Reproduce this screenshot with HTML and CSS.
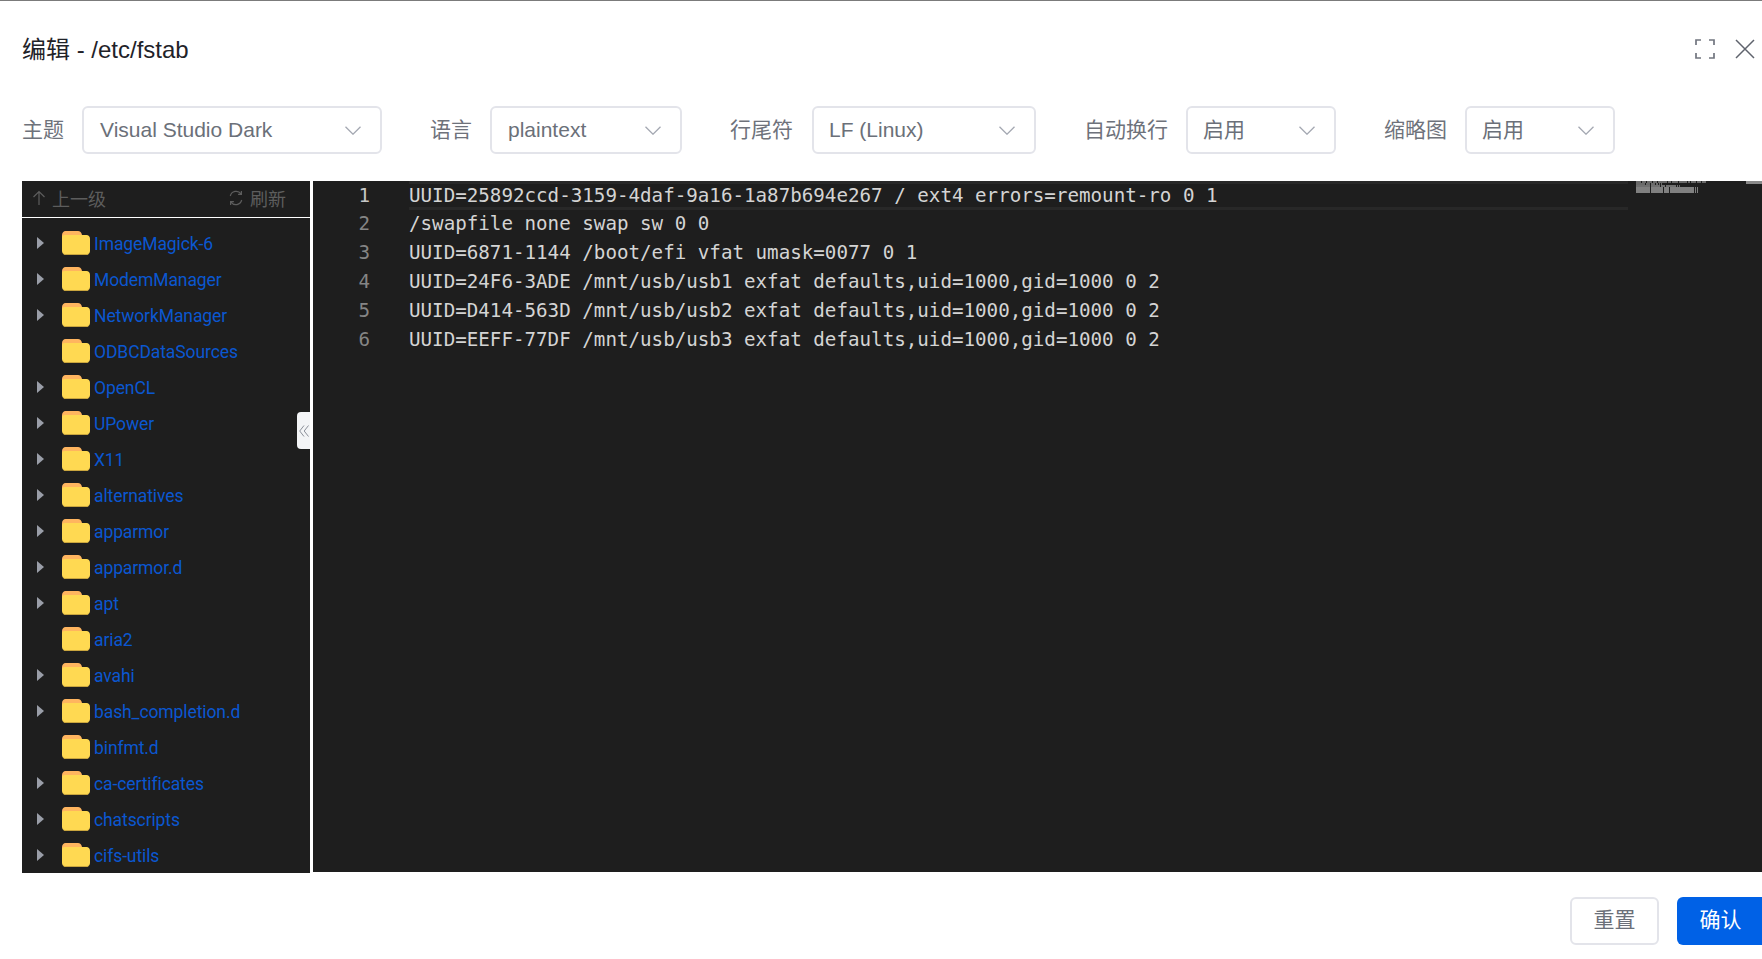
FILE: index.html
```html
<!DOCTYPE html>
<html lang="zh-CN">
<head>
<meta charset="utf-8">
<title>编辑 - /etc/fstab</title>
<link rel="stylesheet" href="styles.css">
</head>
<body>
<svg class="defs" width="0" height="0" aria-hidden="true">
  <symbol id="folder" viewBox="0 0 28 24">
    <path d="M0 4C0 1.800 1.600 0 3.500 0H16C18 0 19.500 1.500 20 4V10H0Z" fill="#ffb55f"/>
    <path d="M0 6.500C0 5.100 1.100 4 2.500 4H24.500C26.400 4 28 5.600 28 7.500V20C28 22.200 26.200 24 24 24H4C1.800 24 0 22.200 0 20Z" fill="#ffd952"/>
    <path d="M.5 22C1.200 23.300 2.500 24 4 24H24C25.500 24 26.800 23.300 27.500 22C26.500 22.800 25.500 23 24 23H4C2.500 23 1.500 22.800 .5 22Z" fill="#c9a53e"/>
  </symbol>
  <symbol id="chev" viewBox="0 0 16 9">
    <path d="M.5.700 8 8.200 15.500.700" fill="none" stroke="#a4a8b2" stroke-width="1.300"/>
  </symbol>
</svg>
<div class="dialog">
  <header class="head">
    <h1 class="title">编辑 - /etc/fstab</h1>
    <div class="head-icons">
      <svg class="ico-full" width="20" height="20" viewBox="0 0 20 20"><path d="M1 6V1H6M14 1H19V6M19 14V19H14M6 19H1V14" fill="none" stroke="#71757f" stroke-width="1.700"/></svg>
      <svg class="ico-close" width="20" height="20" viewBox="0 0 20 20"><path d="M1 1 19 19M19 1 1 19" fill="none" stroke="#5f636d" stroke-width="1.500"/></svg>
    </div>
  </header>

  <div class="toolbar">
    <label class="label">主题</label>
    <div class="select s-theme"><span>Visual Studio Dark</span><svg class="chev"><use href="#chev"/></svg></div>
    <label class="label l-lang">语言</label>
    <div class="select s-lang"><span>plaintext</span><svg class="chev"><use href="#chev"/></svg></div>
    <label class="label l-eol">行尾符</label>
    <div class="select s-eol"><span>LF (Linux)</span><svg class="chev"><use href="#chev"/></svg></div>
    <label class="label l-wrap">自动换行</label>
    <div class="select s-on"><span class="zh">启用</span><svg class="chev"><use href="#chev"/></svg></div>
    <label class="label l-map">缩略图</label>
    <div class="select s-on"><span class="zh">启用</span><svg class="chev"><use href="#chev"/></svg></div>
  </div>

  <div class="workspace">
    <aside class="tree">
      <div class="tree-head">
        <span class="tree-up">
          <svg width="14" height="16" viewBox="0 0 14 16"><path d="M7 15V1.500M1.500 7 7 1.500 12.500 7" fill="none" stroke="#5d5d5d" stroke-width="1.200"/></svg>
          上一级
        </span>
        <span class="tree-refresh">
          <svg width="16" height="16" viewBox="0 0 16 16"><path d="M2.300 6A6 6 0 0 1 13 3.800M13.700 10A6 6 0 0 1 3 12.200M13.400 1V4.300H10.100M2.600 15V11.700H5.900" fill="none" stroke="#5d5d5d" stroke-width="1.200"/></svg>
          刷新
        </span>
      </div>
      <ul class="tree-list">
        <li class="row"><i class="arrow"></i><svg class="folder"><use href="#folder"/></svg><a>ImageMagick-6</a></li>
        <li class="row"><i class="arrow"></i><svg class="folder"><use href="#folder"/></svg><a>ModemManager</a></li>
        <li class="row"><i class="arrow"></i><svg class="folder"><use href="#folder"/></svg><a>NetworkManager</a></li>
        <li class="row"><i class="noarrow"></i><svg class="folder"><use href="#folder"/></svg><a>ODBCDataSources</a></li>
        <li class="row"><i class="arrow"></i><svg class="folder"><use href="#folder"/></svg><a>OpenCL</a></li>
        <li class="row"><i class="arrow"></i><svg class="folder"><use href="#folder"/></svg><a>UPower</a></li>
        <li class="row"><i class="arrow"></i><svg class="folder"><use href="#folder"/></svg><a>X11</a></li>
        <li class="row"><i class="arrow"></i><svg class="folder"><use href="#folder"/></svg><a>alternatives</a></li>
        <li class="row"><i class="arrow"></i><svg class="folder"><use href="#folder"/></svg><a>apparmor</a></li>
        <li class="row"><i class="arrow"></i><svg class="folder"><use href="#folder"/></svg><a>apparmor.d</a></li>
        <li class="row"><i class="arrow"></i><svg class="folder"><use href="#folder"/></svg><a>apt</a></li>
        <li class="row"><i class="noarrow"></i><svg class="folder"><use href="#folder"/></svg><a>aria2</a></li>
        <li class="row"><i class="arrow"></i><svg class="folder"><use href="#folder"/></svg><a>avahi</a></li>
        <li class="row"><i class="arrow"></i><svg class="folder"><use href="#folder"/></svg><a>bash_completion.d</a></li>
        <li class="row"><i class="noarrow"></i><svg class="folder"><use href="#folder"/></svg><a>binfmt.d</a></li>
        <li class="row"><i class="arrow"></i><svg class="folder"><use href="#folder"/></svg><a>ca-certificates</a></li>
        <li class="row"><i class="arrow"></i><svg class="folder"><use href="#folder"/></svg><a>chatscripts</a></li>
        <li class="row"><i class="arrow"></i><svg class="folder"><use href="#folder"/></svg><a>cifs-utils</a></li>
      </ul>
      <button class="collapse" type="button" aria-label="收起">
        <svg width="10" height="12" viewBox="0 0 10 12"><path d="M5 .5 0.700 6 5 11.500M9.500 .5 5.200 6 9.500 11.500" fill="none" stroke="#8b8f99" stroke-width="1"/></svg>
      </button>
    </aside>

    <section class="editor">
      <div class="current-line"></div>
      <div class="line"><span class="num num-on">1</span><code>UUID=25892ccd-3159-4daf-9a16-1a87b694e267 / ext4 errors=remount-ro 0 1</code></div>
      <div class="line"><span class="num">2</span><code>/swapfile none swap sw 0 0</code></div>
      <div class="line"><span class="num">3</span><code>UUID=6871-1144 /boot/efi vfat umask=0077 0 1</code></div>
      <div class="line"><span class="num">4</span><code>UUID=24F6-3ADE /mnt/usb/usb1 exfat defaults,uid=1000,gid=1000 0 2</code></div>
      <div class="line"><span class="num">5</span><code>UUID=D414-563D /mnt/usb/usb2 exfat defaults,uid=1000,gid=1000 0 2</code></div>
      <div class="line"><span class="num">6</span><code>UUID=EEFF-77DF /mnt/usb/usb3 exfat defaults,uid=1000,gid=1000 0 2</code></div>
      <svg class="minimap" width="72" height="12" viewBox="0 0 72 12" aria-hidden="true">
        <g fill="none" stroke-width="2">
          <path d="M0 1H70" stroke="#6a6a6a" stroke-dasharray="5 1 4 1 5 1 4 1 9 1 3 1 6 1 8 1 2 1"/>
          <path d="M0 3H27" stroke="#6a6a6a" stroke-dasharray="9 1 4 1 4 1 2 1 1 1 1"/>
          <path d="M0 5H45" stroke="#707070" stroke-dasharray="14 1 9 1 4 1 10 1 1 1 1"/>
          <path d="M0 7H66" stroke="#808080" stroke-dasharray="14 1 12 1 5 1 24 1 1 1 1"/>
          <path d="M0 9H66" stroke="#808080" stroke-dasharray="14 1 12 1 5 1 24 1 1 1 1"/>
          <path d="M0 11H66" stroke="#808080" stroke-dasharray="14 1 12 1 5 1 24 1 1 1 1"/>
        </g>
      </svg>
      <div class="overview-mark"></div>
    </section>
  </div>

  <footer class="foot">
    <button class="btn btn-reset" type="button">重置</button>
    <button class="btn btn-ok" type="button">确认</button>
  </footer>
</div>
</body>
</html>
```
FILE: styles.css
```css
* { box-sizing: border-box; }
html, body { margin: 0; padding: 0; height: 100%; overflow: hidden; background: #fff; }
body { font-family: "Liberation Sans", "Noto Sans CJK SC", sans-serif; }
.defs { position: absolute; }

.dialog { width: 1762px; height: 959px; border-top: 1px solid #7b7b7b; padding-left: 22px; display: flex; flex-direction: column; overflow: hidden; }

.head { height: 105px; display: flex; justify-content: space-between; align-items: flex-start; padding-top: 33px; }
.title { margin: 0; font-size: 24px; line-height: 32px; font-weight: 400; color: #1f2329; }
.head-icons { display: flex; gap: 20px; padding-top: 5px; padding-right: 7px; }

.toolbar { height: 48px; display: flex; align-items: center; }
.label { font-size: 21px; color: #6e727b; white-space: nowrap; padding-bottom: 4px; }
.select { height: 48px; display: flex; align-items: center; justify-content: space-between; padding: 0 19px 0 16px; border: 2px solid #e3e4ea; border-radius: 6px; font-size: 21px; color: #6b7079; background: #fff; }
.zh { padding-bottom: 4px; margin-left: -1px; }
.chev { width: 16px; height: 9px; flex: none; }
.s-theme { width: 300px; margin-left: 18px; }
.s-lang { width: 192px; margin-left: 18px; }
.s-eol { width: 224px; margin-left: 19px; padding-left: 15px; }
.s-on { width: 150px; margin-left: 18px; }
.l-lang { margin-left: 48px; }
.l-eol { margin-left: 48px; }
.l-wrap { margin-left: 48px; }
.l-map { margin-left: 48px; }

.workspace { height: 691px; margin-top: 27px; display: flex; gap: 3px; }

.tree { width: 288px; height: 692px; flex: none; background: #1e1e1e; position: relative; overflow: hidden; }
.tree-head { height: 37px; border-bottom: 1px solid #fff; display: flex; justify-content: space-between; align-items: center; padding: 0 24px 2px 10px; font-size: 18px; color: #5d5d5d; }
.tree-up, .tree-refresh { display: flex; align-items: center; gap: 6px; }
.tree-list { list-style: none; margin: 0; padding: 8px 0 0; }
.row { height: 36px; display: flex; align-items: center; }
.arrow { width: 0; height: 0; margin-left: 15px; margin-right: 18px; border-left: 7px solid #9a9ea8; border-top: 6px solid transparent; border-bottom: 6px solid transparent; margin-top: -2px; }
.noarrow { width: 7px; margin-left: 15px; margin-right: 18px; }
.folder { width: 28px; height: 24px; flex: none; margin-top: -2px; }
.row a { margin-left: 4px; font-family: Roboto, sans-serif; font-size: 17.5px; letter-spacing: -.1px; color: #0b57d0; white-space: nowrap; }
.collapse { position: absolute; top: 231px; right: 0; width: 13px; height: 37px; padding: 0; border: 0; border-radius: 4px 0 0 4px; background: #f3f4f6; display: flex; align-items: center; justify-content: center; }

.editor { flex: 1; background: #1e1e1e; position: relative; overflow: hidden; padding-top: .7px; }
.current-line { position: absolute; left: 96px; top: 0; width: 1219px; height: 29px; border-top: 3px solid #282828; border-bottom: 3px solid #282828; }
.line { height: 28.8px; display: flex; position: relative; font-family: "DejaVu Sans Mono", monospace; font-size: 19.2px; line-height: 28.8px; white-space: pre; }
.num { width: 57px; text-align: right; color: #858585; }
.num-on { color: #c6c6c6; }
.line code { margin-left: 39px; font: inherit; color: #d4d4d4; }
.minimap { position: absolute; left: 1323px; top: 0; }
.overview-mark { position: absolute; right: 0; top: 0; width: 16px; height: 3px; background: #8a8a8a; }

.foot { flex: 1; display: flex; justify-content: flex-end; align-items: flex-start; gap: 18px; padding-top: 25px; }
.btn { height: 48px; font-family: "Noto Sans CJK SC", sans-serif; font-size: 21px; padding: 0 0 6px; }
.btn-reset { width: 89px; background: #fff; border: 2px solid #e3e4ea; border-radius: 6px; color: #6b7079; }
.btn-ok { width: 85px; padding-left: 2px; background: #0061e6; border: 0; border-radius: 6px 0 0 6px; color: #fff; }
```
